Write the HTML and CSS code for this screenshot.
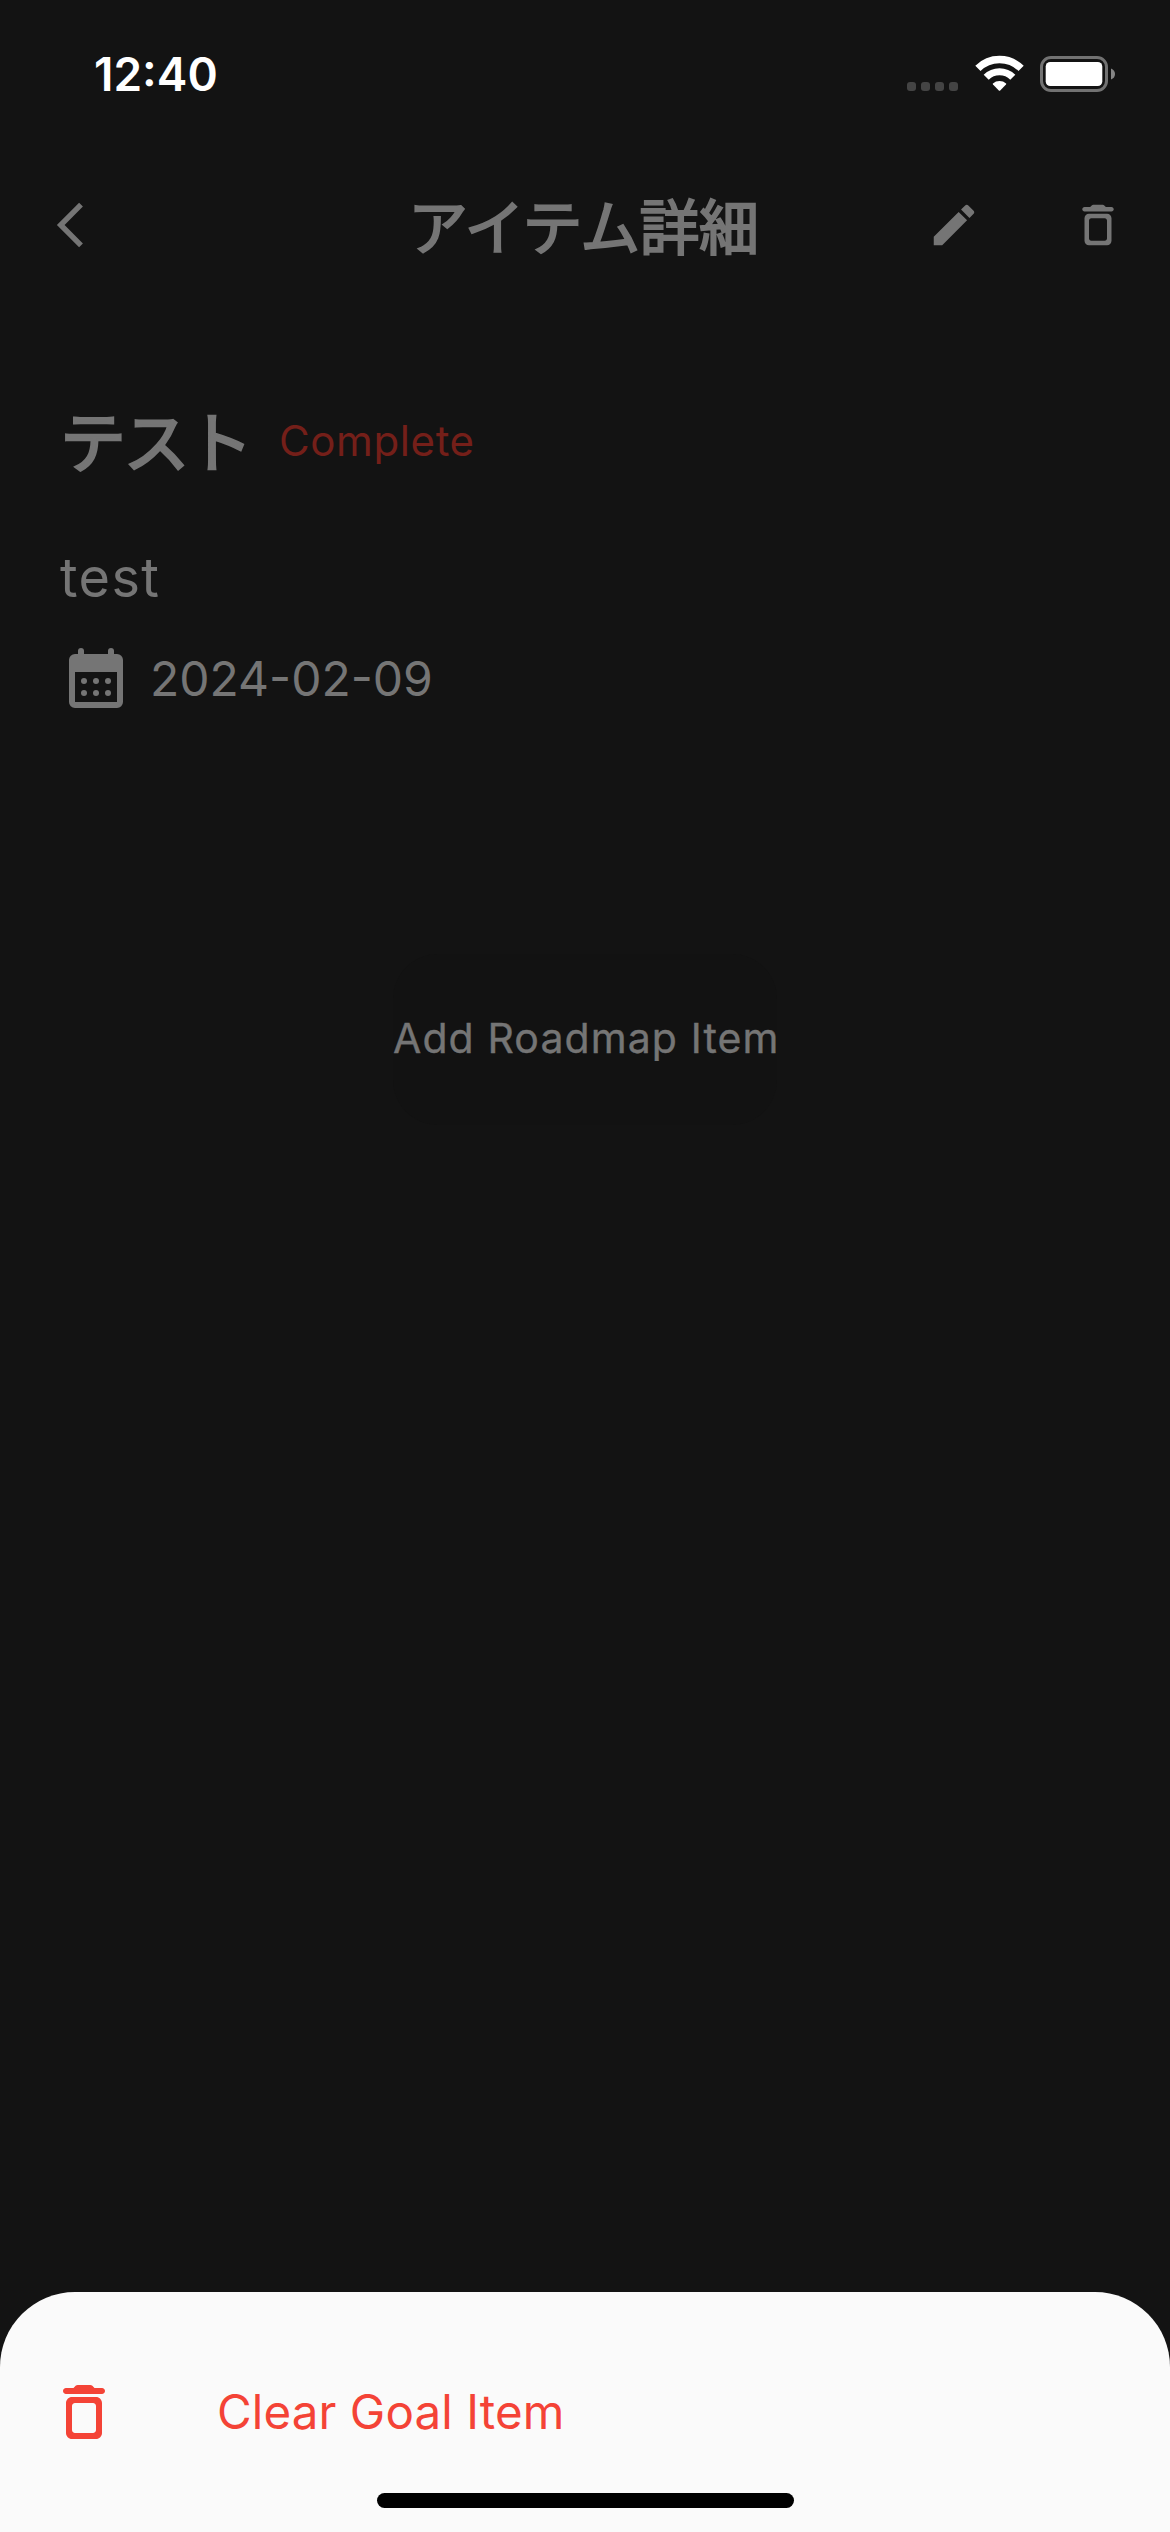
FILE: index.html
```html
<!DOCTYPE html>
<html lang="ja">
<head>
<meta charset="utf-8">
<title>アイテム詳細</title>
<link rel="stylesheet" href="styles.css">
</head>
<body>
<div class="screen">
  <header class="status">
    <span class="time">12:40</span>
    <div class="indicators">
      <div class="dots"><i></i><i></i><i></i><i></i></div>
      <svg class="wifi" width="49" height="37" viewBox="0 0 49 37">
        <path d="M2.9 13.4 A30.7 30.7 0 0 1 46.1 13.4" fill="none" stroke="#fff" stroke-width="7.4"/>
        <path d="M11.2 22.2 A18.9 18.9 0 0 1 37.8 22.2" fill="none" stroke="#fff" stroke-width="7.2"/>
        <path d="M17.9 28.4 A10.2 10.2 0 0 1 31.1 28.4 Q31.5 29 31 29.6 L25.2 35.4 Q24.5 36 23.8 35.4 L18 29.6 Q17.5 29 17.9 28.4Z" fill="#fff"/>
      </svg>
      <svg class="battery" width="76" height="36" viewBox="0 0 76 36">
        <rect x="1.5" y="1.5" width="65" height="33" rx="9.5" fill="none" stroke="#727272" stroke-width="3"/>
        <rect x="5.7" y="6" width="56.6" height="24" rx="4.5" fill="#fff"/>
        <path d="M71 12.5 Q75 14 75 18 Q75 22 71 23.5Z" fill="#858585"/>
      </svg>
    </div>
  </header>

  <nav class="appbar">
    <svg class="back" width="30" height="46" viewBox="0 0 30 46"><path d="M26 2.7 L5.7 23 L26 43.3" fill="none" stroke="currentColor" stroke-width="5.4"/></svg>
    <h1 class="title">アイテム詳細</h1>
    <div class="actions">
      <svg width="54" height="54" viewBox="0 0 24 24" fill="currentColor"><path d="M3 17.25V21h3.75L17.81 9.94l-3.75-3.75L3 17.25zM20.71 7.04c.39-.39.39-1.02 0-1.41l-2.34-2.34c-.39-.39-1.02-.39-1.41 0l-1.83 1.83 3.75 3.75 1.83-1.83z"/></svg>
      <svg width="54" height="54" viewBox="0 0 24 24" fill="currentColor"><path fill-rule="evenodd" d="M6 19c0 1.1.9 2 2 2h8c1.1 0 2-.9 2-2V9c0-1.1-.9-2-2-2H8c-1.1 0-2 .9-2 2v10zM9 9h6c.55 0 1 .45 1 1v8c0 .55-.45 1-1 1H9c-.55 0-1-.45-1-1v-8c0-.55.45-1 1-1z"/><path d="M15.500 4l-.71-.71c-.18-.18-.44-.29-.7-.29H9.910c-.26 0-.52.11-.7.29L8.500 4H6c-.55 0-1 .45-1 1s.45 1 1 1h12c.55 0 1-.45 1-1s-.45-1-1-1h-2.500z"/></svg>
    </div>
  </nav>

  <main class="content">
    <div class="heading">
      <h2 class="name">テスト</h2>
      <span class="state">Complete</span>
    </div>
    <p class="note">test</p>
    <div class="date">
      <svg width="72" height="72" viewBox="0 0 24 24" fill="currentColor">
        <path fill-rule="evenodd" d="M5 4H19a2 2 0 0 1 2 2V20a2 2 0 0 1-2 2H5a2 2 0 0 1-2-2V6a2 2 0 0 1 2-2zM5 10V20H19V10z"/>
        <rect x="6" y="2" width="2" height="4" rx="1"/><rect x="16" y="2" width="2" height="4" rx="1"/>
        <circle cx="8" cy="13" r="1"/><circle cx="12" cy="13" r="1"/><circle cx="16" cy="13" r="1"/>
        <circle cx="8" cy="17" r="1"/><circle cx="12" cy="17" r="1"/><circle cx="16" cy="17" r="1"/>
      </svg>
      <time>2024-02-09</time>
    </div>
    <button class="add">Add Roadmap Item</button>
  </main>

  <section class="sheet">
    <div class="row">
      <svg width="72" height="72" viewBox="0 0 24 24" fill="currentColor"><path fill-rule="evenodd" d="M6 19c0 1.1.9 2 2 2h8c1.1 0 2-.9 2-2V9c0-1.1-.9-2-2-2H8c-1.1 0-2 .9-2 2v10zM9 9h6c.55 0 1 .45 1 1v8c0 .55-.45 1-1 1H9c-.55 0-1-.45-1-1v-8c0-.55.45-1 1-1z"/><path d="M15.500 4l-.71-.71c-.18-.18-.44-.29-.7-.29H9.910c-.26 0-.52.11-.7.29L8.500 4H6c-.55 0-1 .45-1 1s.45 1 1 1h12c.55 0 1-.45 1-1s-.45-1-1-1h-2.500z"/></svg>
      <span class="label">Clear Goal Item</span>
    </div>
    <div class="home"></div>
  </section>
</div>
</body>
</html>
```
FILE: styles.css
```css
* { box-sizing: border-box; margin: 0; padding: 0; }
body { background: #131313; font-family: Inter, "Noto Sans CJK JP", sans-serif; }
svg { display: block; flex: none; }
.screen { width: 1170px; height: 2532px; display: flex; flex-direction: column; color: #757575; overflow: hidden; }

.status { height: 141px; padding: 44px 54px 0 94px; display: flex; justify-content: space-between; align-items: flex-start; color: #fff; }
.time { font-size: 46px; line-height: 60px; font-weight: 600; letter-spacing: 0; }
.indicators { display: flex; }
.dots { display: flex; gap: 5px; padding-top: 38px; margin-right: 17px; }
.dots i { width: 9px; height: 9px; border-radius: 3px; background: #444; }
.wifi { margin: 11px 16px 0 0; }
.battery { margin-top: 12px; }

.appbar { height: 168px; padding: 0 45px 0 55px; display: grid; grid-template-columns: 353px auto 1fr; align-items: center; }
.title { padding-top: 6px; font-size: 60px; line-height: 80px; font-weight: 400; -webkit-text-stroke: 2px currentColor; letter-spacing: -0.6px; white-space: nowrap; }
.actions { display: flex; justify-content: flex-end; gap: 90px; }

.content { flex: 1; padding: 81px 60px 0; display: flex; flex-direction: column; align-items: flex-start; }
.heading { height: 102px; display: flex; align-items: center; }
.name { width: 196px; padding-top: 4px; font-size: 66px; line-height: 98px; font-weight: 400; -webkit-text-stroke: 2.4px currentColor; letter-spacing: -2.5px; white-space: nowrap; }
.state { margin-left: 23px; font-size: 42px; line-height: 60px; font-weight: 400; letter-spacing: 0.6px; color: #741f19; }
.note { margin-top: 53px; font-size: 54px; line-height: 66px; font-weight: 400; letter-spacing: 1.4px; }
.date { margin-top: 31px; display: flex; align-items: center; }
.date time { margin-left: 18px; padding-top: 1px; font-size: 48px; line-height: 60px; font-weight: 400; letter-spacing: 0; }
.add { align-self: center; width: 384px; height: 171px; margin-top: 240px; padding-bottom: 4px; border: 0; border-radius: 45px; background: #121212; color: inherit; font: 400 41px/60px Inter, sans-serif; -webkit-text-stroke: 0.4px currentColor; letter-spacing: 1.1px; white-space: nowrap; }

.sheet { height: 240px; padding: 84px 48px 0; border-radius: 75px 75px 0 0; background: #fafafa; color: #f44336; display: flex; flex-direction: column; align-items: center; }
.row { width: 100%; display: flex; align-items: center; }
.label { margin-left: 97px; font-size: 47.5px; line-height: 72px; font-weight: 400; letter-spacing: 0.1px; white-space: nowrap; }
.home { width: 417px; height: 15px; margin-top: 45px; border-radius: 8px; background: #000; }
```
